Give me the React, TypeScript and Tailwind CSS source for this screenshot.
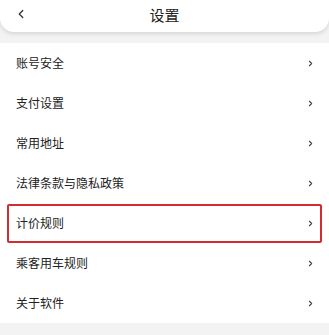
import { ChevronLeft, ChevronRight } from 'lucide-react'

const items = ['账号安全', '支付设置', '常用地址', '法律条款与隐私政策', '计价规则', '乘客用车规则', '关于软件']

export default function App() {
  return (
    <div
      className="w-[329px] h-[335px] overflow-hidden bg-[#f3f3f3]"
      style={{ fontFamily: '"Noto Sans CJK SC", "Noto Sans", sans-serif' }}
    >
      {/* Header */}
      <div className="relative h-[32px] bg-white rounded-b-[14px] shadow-[0_2px_4px_rgba(0,0,0,0.12)] flex items-center justify-center pb-[3px]">
        <ChevronLeft className="absolute left-[14px] top-[7px] w-[14px] h-[14px] text-[#333]" strokeWidth={2.2} />
        <span className="text-[15px] text-[#222] leading-none">设置</span>
      </div>

      {/* List */}
      <div className="mt-[11px] bg-white">
        {items.map(label => (
          <div key={label} className="h-[40px] px-[7px] flex items-center">
            <div
              className={`flex-1 h-[39px] flex items-center justify-between pl-[7px] pr-[5px] rounded-[2px] ${
                label === '计价规则' ? 'border-2 border-[#d42a32]' : 'border-2 border-transparent'
              }`}
            >
              <span className="text-[12px] text-[#222] leading-none">{label}</span>
              <ChevronRight className="w-[9px] h-[9px] text-[#444]" strokeWidth={3} />
            </div>
          </div>
        ))}
      </div>
    </div>
  )
}
